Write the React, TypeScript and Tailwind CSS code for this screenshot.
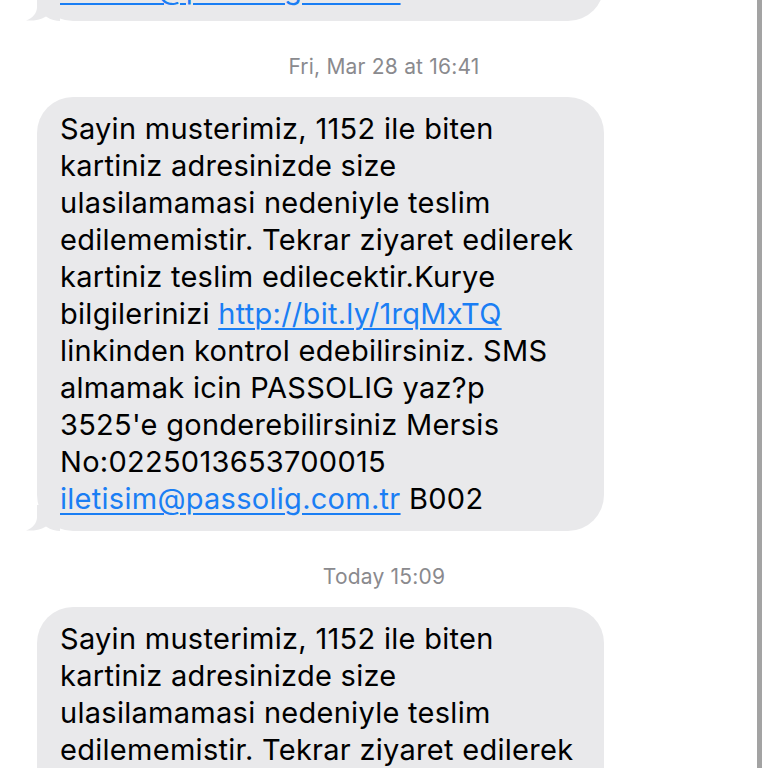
import React from "react";

const Link = ({ children }: { children: React.ReactNode }) => (
  <span className="text-[#1a7ef4] underline decoration-[2px] underline-offset-[4px]">{children}</span>
);

const lines: React.ReactNode[] = [
  "Sayin musterimiz, 1152 ile biten",
  "kartiniz adresinizde size",
  "ulasilamamasi nedeniyle teslim",
  "edilememistir. Tekrar ziyaret edilerek",
  "kartiniz teslim edilecektir.Kurye",
  <>bilgilerinizi <Link>http://bit.ly/1rqMxTQ</Link></>,
  "linkinden kontrol edebilirsiniz. SMS",
  "almamak icin PASSOLIG yaz?p",
  "3525'e gonderebilirsiniz Mersis",
  "No:0225013653700015",
  <><Link>iletisim@passolig.com.tr</Link> B002</>,
];

function Tail() {
  return (
    <svg
      className="absolute left-[-11px] bottom-0"
      width="34"
      height="26"
      viewBox="0 0 34 26"
    >
      <path
        d="M11 0 L11 12 C11 18 7 23 0 25.5 C7 26 14 25 20 21.5 C25 25 30 26 34 26 L34 0 Z"
        fill="#e9e9eb"
      />
    </svg>
  );
}

function Bubble({ count, tail }: { count: number; tail?: boolean }) {
  return (
    <div className="relative ml-[37px] w-[567px] rounded-[36px] bg-[#e9e9eb] pl-[23px] pr-[10px] pt-[13px] pb-[14px]">
      {tail && <Tail />}
      <div
        className="relative text-[29px] leading-[37px] text-black tracking-[0.28px] whitespace-nowrap"
        style={{ fontFamily: "Inter, 'Noto Sans', sans-serif" }}
      >
        {lines.slice(0, count).map((l, i) => (
          <div key={i}>{l}</div>
        ))}
      </div>
    </div>
  );
}

function Stamp({ children }: { children: React.ReactNode }) {
  return (
    <div
      className="mt-[33px] mb-[17px] pl-[11px] text-center text-[21px] leading-[26px] tracking-[0.2px] text-[#8a8a8e]"
      style={{ fontFamily: "Inter, 'Noto Sans', sans-serif" }}
    >
      {children}
    </div>
  );
}

export default function App() {
  return (
    <div className="flex h-[768px] w-[768px] overflow-hidden bg-white">
      <div className="w-[757px] shrink-0 flex flex-col">
        <div className="mt-[-413px]">
          <Bubble count={11} tail />
        </div>
        <Stamp>Fri, Mar 28 at 16:41</Stamp>
        <Bubble count={11} tail />
        <Stamp>Today 15:09</Stamp>
        <Bubble count={11} tail />
      </div>
      <div className="w-[5px] shrink-0 bg-[#a3a3a3]" />
      <div className="flex-1 bg-white" />
    </div>
  );
}
